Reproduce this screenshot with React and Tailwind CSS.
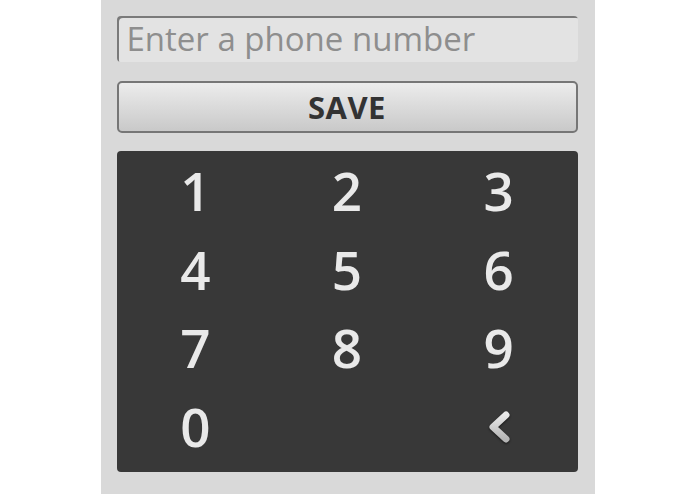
const keys = ["1", "2", "3", "4", "5", "6", "7", "8", "9", "0", "", "back"];

function BackKey() {
  return (
    <svg width="24" height="34" viewBox="0 0 24 34" className="drop-shadow-[0_1px_1px_rgba(0,0,0,0.6)]">
      <defs>
        <linearGradient id="chev" x1="0" y1="0" x2="0" y2="1">
          <stop offset="0" stopColor="#e8e8e8" />
          <stop offset="1" stopColor="#b5b5b5" />
        </linearGradient>
      </defs>
      <path
        d="M19 5 L6 17 L19 29"
        fill="none"
        stroke="url(#chev)"
        strokeWidth="7"
        strokeLinecap="round"
        strokeLinejoin="round"
      />
    </svg>
  );
}

export default function App() {
  return (
    <div className="w-[695px] h-[494px] bg-white font-['Open_Sans',sans-serif]">
      <div className="mx-auto w-[494px] h-full bg-[#d9d9d9] pl-[16px] pr-[17px] pt-[16px] flex flex-col">
        <input
          type="text"
          placeholder="Enter a phone number"
          className="h-[46px] w-full rounded-[4px] bg-[#e3e3e3] px-[10px] text-[33px] font-medium text-[#333] placeholder:text-[#8e8e8e] outline-none shadow-[inset_2px_2px_0_#7a7a7a]"
        />
        <button className="mt-[19px] h-[52px] w-full rounded-[5px] border-2 border-[#767676] bg-gradient-to-b from-[#ececec] to-[#c9c9c9] text-[31px] font-bold leading-none text-[#333] tracking-[0.5px]">
          SAVE
        </button>
        <div className="mt-[18px] h-[321px] rounded-[4px] bg-[#383838] grid grid-cols-3 grid-rows-4 px-[3px] pb-[6px]">
          {keys.map((k, i) => (
            <div key={i} className="flex items-center justify-center text-[53px] font-semibold leading-none text-[#e9e9e9]">
              {k === "back" ? <BackKey /> : k}
            </div>
          ))}
        </div>
      </div>
    </div>
  );
}
